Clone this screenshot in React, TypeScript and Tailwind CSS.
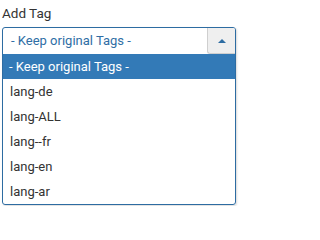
const OPTIONS = ["lang-de", "lang-ALL", "lang--fr", "lang-en", "lang-ar"];

export default function App() {
  return (
    <div className="w-[240px] h-[206px] bg-white font-['Roboto',sans-serif] text-[13px] text-[#333]">
      <div className="pl-[2px] pt-[3px] leading-[20px] text-[13.5px]">Add Tag</div>

      {/* Chosen-style select, open */}
      <div className="mt-[4px] ml-[2px] w-[234px] border border-[#2d6ca2] rounded-[3px] shadow-[1px_1px_2px_rgba(0,0,0,0.15)] overflow-hidden">
        <div className="flex h-[26px]">
          <div className="flex-1 pl-[8px] leading-[26px] text-[#2f6ea5]">- Keep original Tags -</div>
          <div className="w-[28px] h-[26px] bg-[#efefef] border-l border-b border-[#cfcfcf] rounded-bl-[3px] flex items-center justify-center">
            <svg width="8" height="4" viewBox="0 0 8 4">
              <path d="M0 4 L4 0 L8 4 Z" fill="#2d6ca2" />
            </svg>
          </div>
        </div>
        <div className="h-[25px] bg-[#337ab7] text-white pl-[6px] leading-[25px]">- Keep original Tags -</div>
        {OPTIONS.map((o) => (
          <div key={o} className="h-[25px] pl-[7px] leading-[25px]">
            {o}
          </div>
        ))}
      </div>
    </div>
  );
}
